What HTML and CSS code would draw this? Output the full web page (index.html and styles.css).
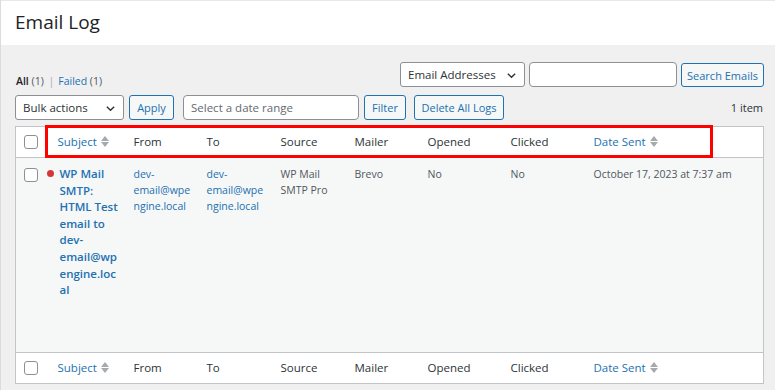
FILE: index.html
```html
<!DOCTYPE html>
<html>
<head>
<meta charset="utf-8">
<link rel="stylesheet" href="styles.css">
</head>
<body>
<header class="page-header">
  <h1 class="page-title">Email Log</h1>
</header>
<main class="content">
  <div class="top-row">
    <ul class="subsubsub">
      <li><a class="current" href="#">All <span class="count">(1)</span></a> <span class="sep">|</span></li>
      <li><a href="#">Failed <span class="count">(1)</span></a></li>
    </ul>
    <div class="search-box">
      <div class="select select-search">Email Addresses<svg class="chev" viewBox="0 0 12 12"><path d="M2 4 L6 8 L10 4" fill="none" stroke="#2c3338" stroke-width="1.5"/></svg></div>
      <div class="input input-search"></div>
      <button class="btn">Search Emails</button>
    </div>
  </div>
  <div class="nav-row">
    <div class="actions">
      <div class="select select-bulk">Bulk actions<svg class="chev" viewBox="0 0 12 12"><path d="M2 4 L6 8 L10 4" fill="none" stroke="#2c3338" stroke-width="1.5"/></svg></div>
      <button class="btn btn-apply">Apply</button>
      <div class="input input-date">Select a date range</div>
      <button class="btn btn-filter">Filter</button>
      <button class="btn btn-delete">Delete All Logs</button>
    </div>
    <div class="items">1 item</div>
  </div>
  <div class="table-wrap">
    <table class="list">
      <colgroup>
        <col class="c-cb"><col class="c-subj"><col class="c-from"><col class="c-to"><col class="c-src"><col class="c-mail"><col class="c-open"><col class="c-click"><col>
      </colgroup>
      <thead>
        <tr>
          <th class="cb"><span class="checkbox"></span></th>
          <th class="sortable">Subject<span class="sort"><i class="up"></i><i class="down"></i></span></th>
          <th>From</th>
          <th>To</th>
          <th>Source</th>
          <th>Mailer</th>
          <th>Opened</th>
          <th>Clicked</th>
          <th class="sortable">Date Sent<span class="sort"><i class="up"></i><i class="down"></i></span></th>
        </tr>
      </thead>
      <tbody>
        <tr>
          <td class="cb"><span class="checkbox"></span></td>
          <td class="subject"><span class="dot"></span><a href="#">WP Mail SMTP: HTML Test email to dev-email@wpengine.local</a></td>
          <td class="email">dev-email@wpengine.local</td>
          <td class="email">dev-email@wpengine.local</td>
          <td>WP Mail SMTP Pro</td>
          <td>Brevo</td>
          <td>No</td>
          <td>No</td>
          <td>October 17, 2023 at 7:37 am</td>
        </tr>
      </tbody>
      <tfoot>
        <tr>
          <th class="cb"><span class="checkbox"></span></th>
          <th class="sortable">Subject<span class="sort"><i class="up"></i><i class="down"></i></span></th>
          <th>From</th>
          <th>To</th>
          <th>Source</th>
          <th>Mailer</th>
          <th>Opened</th>
          <th>Clicked</th>
          <th class="sortable">Date Sent<span class="sort"><i class="up"></i><i class="down"></i></span></th>
        </tr>
      </tfoot>
    </table>
    <div class="highlight"></div>
  </div>
</main>
</body>
</html>
```
FILE: styles.css
```css
* { box-sizing: border-box; }
html, body { margin: 0; padding: 0; }
body {
  background: #f0f0f1;
  font-family: "Open Sans", "Noto Sans", sans-serif;
  font-size: 11px;
  color: #3c434a;
  width: 775px;
  height: 390px;
  overflow: hidden;
  border-left: 1px solid #dcdcde;
}
.page-header {
  background: #fff;
  height: 45px;
  padding-left: 14px;
  border-top: 1px solid #e8e8e8;
}
.page-title {
  margin: 0;
  font-weight: 400;
  font-size: 19px;
  line-height: 42px;
  color: #1d2327;
}
.content { padding: 0 11px 0 14px; }
.top-row {
  display: flex;
  justify-content: space-between;
  align-items: flex-end;
  margin-top: 17px;
}
.subsubsub {
  list-style: none;
  margin: 0 0 -1px 1px;
  padding: 0;
  display: flex;
  gap: 4px;
  font-size: 10.5px;
}
.subsubsub a { color: #2271b1; text-decoration: none; }
.subsubsub a.current { color: #1d2327; font-weight: 600; }
.subsubsub .count { color: #50575e; font-weight: 400; }
.subsubsub .sep { color: #a7aaad; margin-left: 2px; }
.search-box { display: flex; gap: 4px; }
.select {
  position: relative;
  height: 25px;
  background: #fff;
  border: 1px solid #8c8f94;
  border-radius: 3px;
  color: #2c3338;
  font-size: 11.5px;
  line-height: 23px;
  padding-left: 7px;
}
.chev { position: absolute; right: 7px; top: 7px; width: 11px; height: 11px; }
.select-search { width: 125px; }
.select-bulk { width: 109px; }
.input {
  height: 25px;
  background: #fff;
  border: 1px solid #8c8f94;
  border-radius: 4px;
  color: #646970;
  font-size: 11.5px;
  line-height: 23px;
  padding-left: 7px;
}
.input-search { width: 148px; }
.input-date { width: 176px; margin-left: 4px; }
.btn {
  height: 25px;
  background: #f6f7f7;
  border: 1px solid #2271b1;
  border-radius: 3px;
  color: #2271b1;
  font-family: inherit;
  font-size: 11px;
  padding: 0 8px;
  line-height: 23px;
}
.search-box .btn { width: 83px; margin-top: 1px; height: 24px; padding: 0; }
.nav-row {
  display: flex;
  justify-content: space-between;
  align-items: center;
  margin-top: 8px;
}
.actions { display: flex; gap: 5px; align-items: center; }
.btn-apply { width: 45px; padding: 0; }
.btn-filter { width: 42px; padding: 0; }
.btn-delete { width: 90px; padding: 0; margin-left: 3px; }
.items { color: #2c3338; font-size: 11px; margin-right: 1px; }
.table-wrap { position: relative; margin-top: 6px; width: 749px; }
.list {
  width: 749px;
  border-collapse: collapse;
  table-layout: fixed;
  border: 1px solid #c3c4c7;
  background: #fff;
}
.c-cb { width: 30px; }
.c-subj { width: 76px; }
.c-from { width: 73px; }
.c-to { width: 74px; }
.c-src { width: 74px; }
.c-mail { width: 73px; }
.c-open { width: 83px; }
.c-click { width: 83px; }
th {
  text-align: left;
  font-weight: 400;
  font-size: 11.5px;
  color: #2c3338;
  height: 31px;
  padding: 0 4px 1px 12px;
  vertical-align: middle;
}
thead th { border-bottom: 1px solid #c3c4c7; }
tfoot th { border-top: 1px solid #c3c4c7; height: 31px; }
th.cb, td.cb { padding: 0 0 0 8px; }
th.sortable { color: #2271b1; }
.sort { display: inline-flex; flex-direction: column; gap: 1px; margin-left: 4px; vertical-align: middle; position: relative; top: -1px; }
.sort i { display: block; width: 0; height: 0; border-left: 4px solid transparent; border-right: 4px solid transparent; }
.sort .up { border-bottom: 5px solid #a7aaad; }
.sort .down { border-top: 5px solid #a7aaad; }
.checkbox {
  display: block;
  width: 14px;
  height: 14px;
  border: 1px solid #8c8f94;
  border-radius: 3px;
  background: #fff;
}
tbody tr { background: #f6f7f7; }
td {
  vertical-align: top;
  height: 195px;
  padding: 8px 4px 0 12px;
  font-size: 10.5px;
  line-height: 16px;
  color: #50575e;
}
td.cb { padding-top: 10px; }
td.email { color: #2271b1; overflow-wrap: anywhere; }
td.subject { position: relative; padding-left: 14px; padding-right: 2px; }
td.subject a {
  color: #2271b1;
  font-weight: 600;
  font-size: 11.5px;
  line-height: 16.6px;
  text-decoration: none;
  overflow-wrap: anywhere;
}
.dot {
  position: absolute;
  left: 1px;
  top: 12px;
  width: 7px;
  height: 7px;
  border-radius: 50%;
  background: #d63638;
}
.highlight {
  position: absolute;
  left: 30px;
  top: -1px;
  width: 668px;
  height: 33px;
  border: 3px solid #ff0000;
}
```
